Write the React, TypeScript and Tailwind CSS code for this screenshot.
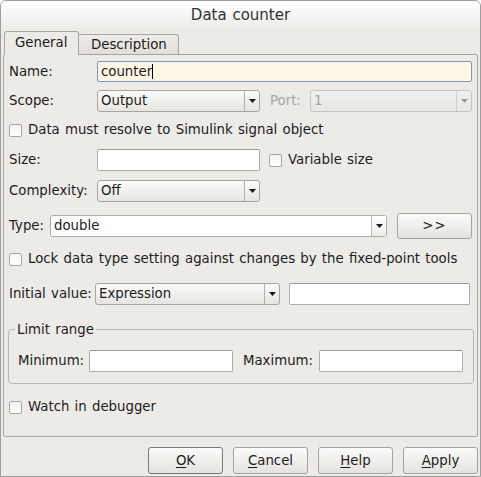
import React from 'react';

const Arrow: React.FC<{ disabled?: boolean }> = ({ disabled }) => (
    <svg width="7" height="4" viewBox="0 0 7 4" className="block">
        <path d="M0 0 H7 L3.5 4 Z" fill={disabled ? '#9a9a9a' : '#1a1a1a'} />
    </svg>
);

const Checkbox: React.FC<{ label: string }> = ({ label }) => (
    <div className="flex items-center h-[18px]">
        <span className="w-[13px] h-[13px] border border-[#a9a7a3] rounded-[2px] bg-gradient-to-b from-[#f4f3f1] to-white" />
        <span className="ml-[6px]">{label}</span>
    </div>
);

const TextBox: React.FC<{ className?: string }> = ({ className = '' }) => (
    <div className={`h-[22px] border border-[#aeaca8] border-t-[#9c9a96] rounded-[2px] bg-white ${className}`} />
);

const Select: React.FC<{ value: string; className?: string; disabled?: boolean }> = ({ value, className = '', disabled }) => (
    <div
        className={`h-[22px] flex border rounded-[3px] bg-gradient-to-b ${
            disabled ? 'border-[#c6c4c0] from-[#f1f0ee] to-[#e9e7e3] text-[#a3a3a3]' : 'border-[#a8a5a0] from-[#fbfbfa] to-[#e7e5e1]'
        } ${className}`}
    >
        <span className="flex-1 pl-[3px] leading-[20px]">{value}</span>
        <span className={`w-[15px] flex items-center justify-center border-l ${disabled ? 'border-[#d0cecb]' : 'border-[#b3b0ab]'}`}>
            <Arrow disabled={disabled} />
        </span>
    </div>
);

const Button: React.FC<{ mnemonic?: string; rest: string; primary?: boolean; className?: string }> = ({ mnemonic, rest, primary, className = '' }) => (
    <button
        className={`h-[27px] w-[75px] border rounded-[3px] bg-gradient-to-b from-[#fbfbfa] to-[#e5e3de] ${
            primary ? 'border-[#7b7976]' : 'border-[#a6a39e]'
        } ${className}`}
    >
        {mnemonic && <span className="underline underline-offset-2">{mnemonic}</span>}
        {rest}
    </button>
);

export default function App() {
    return (
        <div className="w-[481px] h-[477px] bg-[#edebe7] border border-[#9e9e9e] rounded-t-[6px] flex flex-col overflow-hidden font-['DejaVu_Sans',sans-serif] text-[13.3px] [word-spacing:1px] text-[#1c1c1c]">
            <div className="h-[29px] flex items-center justify-center bg-gradient-to-b from-white to-[#edebe7] text-[15px] text-[#2e3436]">
                Data counter
            </div>

            <div className="h-[24px] flex items-end pl-[3px]">
                <div className="relative z-10 -mb-px w-[75px] h-[24px] border border-b-0 border-[#a9a6a1] rounded-t-[3px] bg-[#edebe7] flex items-center pl-[10px] pb-[1px]">
                    General
                </div>
                <div className="w-[100px] h-[20px] border border-b-0 border-l-0 border-[#a9a6a1] rounded-tr-[3px] bg-gradient-to-b from-[#efedea] to-[#e1ded9] flex items-center pl-[12px]">
                    Description
                </div>
            </div>

            <div className="mx-[2px] h-[383px] border border-[#a9a6a1] rounded-[2px] pl-[5px] pr-[5px] flex flex-col">
                <div className="mt-[6px] h-[21px] flex items-center">
                    <span className="w-[88px]">Name:</span>
                    <div className="flex-1 h-[21px] border border-[#7b98bf] rounded-[2px] bg-[#fdf6e4] flex items-center pl-[3px]">
                        <span>counter</span>
                        <span className="w-px h-[15px] bg-black" />
                    </div>
                </div>

                <div className="mt-[8px] flex items-center">
                    <span className="w-[88px]">Scope:</span>
                    <Select value="Output" className="w-[163px]" />
                    <span className="ml-[10px] w-[40px] text-[#a6a6a6]">Port:</span>
                    <Select value="1" className="flex-1" disabled />
                </div>

                <div className="mt-[9px]">
                    <Checkbox label="Data must resolve to Simulink signal object" />
                </div>

                <div className="mt-[10px] flex items-center">
                    <span className="w-[88px]">Size:</span>
                    <TextBox className="w-[163px] h-[21px]" />
                    <div className="ml-[9px]">
                        <Checkbox label="Variable size" />
                    </div>
                </div>

                <div className="mt-[9px] flex items-center">
                    <span className="w-[88px]">Complexity:</span>
                    <Select value="Off" className="w-[163px]" />
                </div>

                <div className="mt-[11px] h-[26px] flex items-center">
                    <span className="w-[41px]">Type:</span>
                    <div className="w-[337px] h-[22px] flex border border-[#aeaca8] rounded-[3px] bg-white">
                        <span className="flex-1 pl-[3px] leading-[20px]">double</span>
                        <span className="w-[15px] flex items-center justify-center border-l border-[#c2bfba] bg-gradient-to-b from-white to-[#eeece9]">
                            <Arrow />
                        </span>
                    </div>
                    <button className="ml-[10px] w-[75px] h-[26px] border border-[#a6a39e] rounded-[3px] bg-gradient-to-b from-[#fbfbfa] to-[#e5e3de] tracking-[1px]">
                        &gt;&gt;
                    </button>
                </div>

                <div className="mt-[11px]">
                    <Checkbox label="Lock data type setting against changes by the fixed-point tools" />
                </div>

                <div className="mt-[15px] flex items-center">
                    <span className="w-[86px]">Initial value:</span>
                    <Select value="Expression" className="w-[185px]" />
                    <TextBox className="ml-[9px] w-[181px]" />
                </div>

                <fieldset className="mt-[17px] -ml-px w-[466px] border border-[#bab7b2] rounded-[4px] pl-[6px] pb-[11px]">
                    <legend className="px-[2px] leading-[15px]">Limit range</legend>
                    <div className="mt-[13px] pl-[3px] flex items-center">
                        <span className="w-[71px]">Minimum:</span>
                        <TextBox className="w-[144px]" />
                        <span className="ml-[10px] w-[76px]">Maximum:</span>
                        <TextBox className="w-[144px]" />
                    </div>
                </fieldset>

                <div className="mt-[14px]">
                    <Checkbox label="Watch in debugger" />
                </div>
            </div>

            <div className="mt-[10px] flex justify-end gap-[10px] pr-[2px]">
                <Button mnemonic="O" rest="K" primary />
                <Button mnemonic="C" rest="ancel" />
                <Button mnemonic="H" rest="elp" />
                <Button mnemonic="A" rest="pply" />
            </div>
        </div>
    );
}
